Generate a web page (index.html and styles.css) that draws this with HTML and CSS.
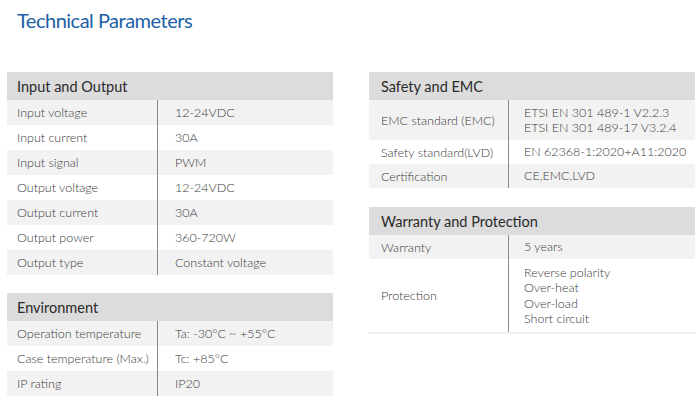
FILE: index.html
```html
<!DOCTYPE html>
<html>
<head>
<meta charset="utf-8">
<link rel="stylesheet" href="styles.css">
</head>
<body>
<div class="page">
  <h1 class="title">Technical Parameters</h1>
  <div class="columns">
    <div class="col col-left">
      <section class="tbl">
        <div class="tbl-head">Input and Output</div>
        <div class="row alt"><div class="k">Input voltage</div><div class="v">12-24VDC</div></div>
        <div class="row"><div class="k">Input current</div><div class="v">30A</div></div>
        <div class="row alt"><div class="k">Input signal</div><div class="v">PWM</div></div>
        <div class="row"><div class="k">Output voltage</div><div class="v">12-24VDC</div></div>
        <div class="row alt"><div class="k">Output current</div><div class="v">30A</div></div>
        <div class="row"><div class="k">Output power</div><div class="v">360-720W</div></div>
        <div class="row alt"><div class="k">Output type</div><div class="v">Constant voltage</div></div>
      </section>
      <section class="tbl">
        <div class="tbl-head">Environment</div>
        <div class="row alt"><div class="k">Operation temperature</div><div class="v">Ta: -30°C ~ +55°C</div></div>
        <div class="row"><div class="k">Case temperature (Max.)</div><div class="v">Tc: +85°C</div></div>
        <div class="row alt"><div class="k">IP rating</div><div class="v">IP20</div></div>
      </section>
    </div>
    <div class="col col-right">
      <section class="tbl">
        <div class="tbl-head">Safety and EMC</div>
        <div class="row alt tall"><div class="k">EMC standard (EMC)</div><div class="v">ETSI EN 301 489-1 V2.2.3<br>ETSI EN 301 489-17 V3.2.4</div></div>
        <div class="row short"><div class="k">Safety standard(LVD)</div><div class="v">EN 62368-1:2020+A11:2020</div></div>
        <div class="row alt short"><div class="k">Certification</div><div class="v">CE,EMC,LVD</div></div>
      </section>
      <section class="tbl">
        <div class="tbl-head">Warranty and Protection</div>
        <div class="row alt short"><div class="k">Warranty</div><div class="v">5 years</div></div>
        <div class="row prot"><div class="k">Protection</div><div class="v">Reverse polarity<br>Over-heat<br>Over-load<br>Short circuit</div></div>
      </section>
    </div>
  </div>
</div>
</body>
</html>
```

FILE: styles.css
```css
html, body {
  margin: 0;
  padding: 0;
  background: #ffffff;
}
.page {
  font-family: "Lato", "Open Sans", sans-serif;
  color: #3a3a3a;
  padding: 0 5px 0 7px;
}
.title {
  margin: 0;
  padding: 8px 0 0 10px;
  height: 72px;
  box-sizing: border-box;
  font-size: 20px;
  line-height: 24px;
  font-weight: 400;
  letter-spacing: -0.5px;
  color: #1c5fa6;
}
.columns {
  display: flex;
  gap: 36px;
}
.col {
  width: 326px;
  display: flex;
  flex-direction: column;
}
.col-left { gap: 18px; }
.col-right { gap: 19px; }
.tbl-head {
  background: #dcdcdc;
  height: 28px;
  display: flex;
  align-items: center;
  padding-left: 10px;
  font-size: 14.5px;
  color: #2a2a2a;
}
.col-right .tbl-head { padding-left: 12px; }
.row {
  display: grid;
  grid-template-columns: 151px 1fr;
  height: 25px;
  font-size: 12.5px;
  font-weight: 300;
}
.col-right .row {
  grid-template-columns: 140px 1fr;
  height: 24px;
}
.row.alt { background: #f2f2f2; }
.col-right .row.tall { height: 40px; }
.col-right .row.prot {
  height: 73px;
  border-bottom: 2px solid #efefef;
}
.k {
  display: flex;
  align-items: center;
  padding-left: 10px;
  border-right: 1px solid #8a8a8a;
}
.col-right .k { padding-left: 12px; }
.v {
  display: flex;
  align-items: center;
  padding-left: 17px;
  line-height: 15.5px;
}
.col-right .v { padding-left: 15px; }
```
